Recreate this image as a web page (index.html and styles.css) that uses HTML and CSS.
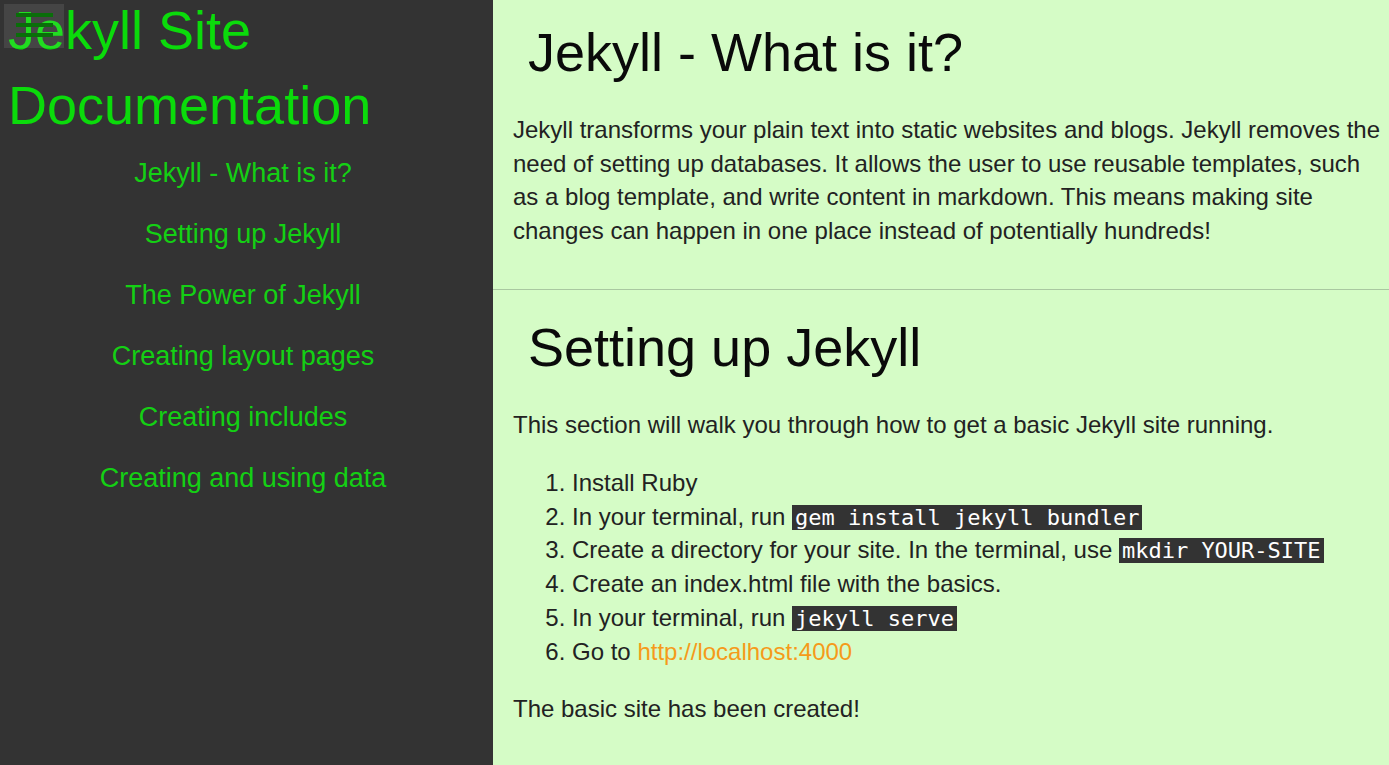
FILE: index.html
```html
<!DOCTYPE html>
<html lang="en">
<head>
<meta charset="utf-8">
<title>Jekyll Site Documentation</title>
<link rel="stylesheet" href="styles.css">
</head>
<body>
<div class="page">
  <aside class="sidebar">
    <div class="menu-btn" role="button" aria-label="Menu">
      <span class="bar"></span>
      <span class="bar"></span>
      <span class="bar"></span>
    </div>
    <h1 class="site-title">Jekyll Site Documentation</h1>
    <nav class="nav">
      <a class="nav-link" href="#what">Jekyll - What is it?</a>
      <a class="nav-link" href="#setup">Setting up Jekyll</a>
      <a class="nav-link" href="#power">The Power of Jekyll</a>
      <a class="nav-link" href="#layouts">Creating layout pages</a>
      <a class="nav-link" href="#includes">Creating includes</a>
      <a class="nav-link" href="#data">Creating and using data</a>
    </nav>
  </aside>
  <main class="content">
    <section class="section section-first" id="what">
      <h2 class="section-title">Jekyll - What is it?</h2>
      <p class="text">Jekyll transforms your plain text into static websites and blogs. Jekyll removes the need of setting up databases. It allows the user to use reusable templates, such as a blog template, and write content in markdown. This means making site changes can happen in one place instead of potentially hundreds!</p>
    </section>
    <section class="section section-next" id="setup">
      <h2 class="section-title">Setting up Jekyll</h2>
      <p class="text">This section will walk you through how to get a basic Jekyll site running.</p>
      <ol class="steps">
        <li>Install Ruby</li>
        <li>In your terminal, run <code class="code">gem install jekyll bundler</code></li>
        <li>Create a directory for your site. In the terminal, use <code class="code">mkdir YOUR-SITE</code></li>
        <li>Create an index.html file with the basics.</li>
        <li>In your terminal, run <code class="code">jekyll serve</code></li>
        <li>Go to <a class="link" href="#">http://localhost:4000</a></li>
      </ol>
      <p class="text">The basic site has been created!</p>
    </section>
  </main>
</div>
</body>
</html>
```

FILE: styles.css
```css
html, body {
  margin: 0;
  padding: 0;
  height: 100%;
  overflow: hidden;
}

body {
  font-family: "Liberation Sans", Arial, sans-serif;
  background: #d5fcc6;
}

.page {
  display: grid;
  grid-template-columns: 493px 1fr;
  min-height: 100vh;
}

.sidebar {
  position: relative;
  background: #333333;
  padding-right: 7px;
}

.menu-btn {
  position: absolute;
  left: 4px;
  top: 4px;
  width: 60px;
  height: 44px;
  box-sizing: border-box;
  padding: 9px 0 0 12px;
  background: rgba(255, 255, 255, 0.09);
  display: flex;
  flex-direction: column;
  align-items: flex-start;
  gap: 6px;
  z-index: 5;
}

.bar {
  display: block;
  flex: none;
  width: 37px;
  height: 4px;
  background-color: #0a6e0a;
}

.site-title {
  margin: -7px 0 0;
  padding-left: 8px;
  font-size: 54px;
  line-height: 75px;
  font-weight: normal;
  color: #0bdb0b;
}

.nav {
  display: flex;
  flex-direction: column;
}

.nav-link {
  display: block;
  text-align: center;
  font-size: 27px;
  line-height: 61px;
  color: #14d014;
  text-decoration: none;
}

.content {
  padding: 0 5px 0 20px;
}

.section {
  border-bottom: 1px solid #a9c8a0;
  margin-left: -20px;
  margin-right: -5px;
  padding-left: 20px;
  padding-right: 5px;
}

.section-first {
  padding-top: 21px;
  padding-bottom: 42px;
}

.section-next {
  padding-top: 26px;
  border-bottom: 0;
}

.section-title {
  margin: 0 0 30px;
  padding-left: 15px;
  font-size: 54px;
  line-height: 62px;
  font-weight: normal;
  color: #0a0a0a;
}

.text {
  margin: 0;
  font-size: 24px;
  line-height: 1.4;
  color: #222222;
}

.steps {
  margin: 24px 0;
  padding-left: 59px;
  font-size: 24px;
  line-height: 1.4;
  color: #222222;
}

.code {
  font-family: "DejaVu Sans Mono", "Liberation Mono", monospace;
  font-size: 22px;
  background: #333333;
  color: #ffffff;
  padding: 0 3px;
}

.link {
  color: #f59a1a;
  text-decoration: none;
}
```
